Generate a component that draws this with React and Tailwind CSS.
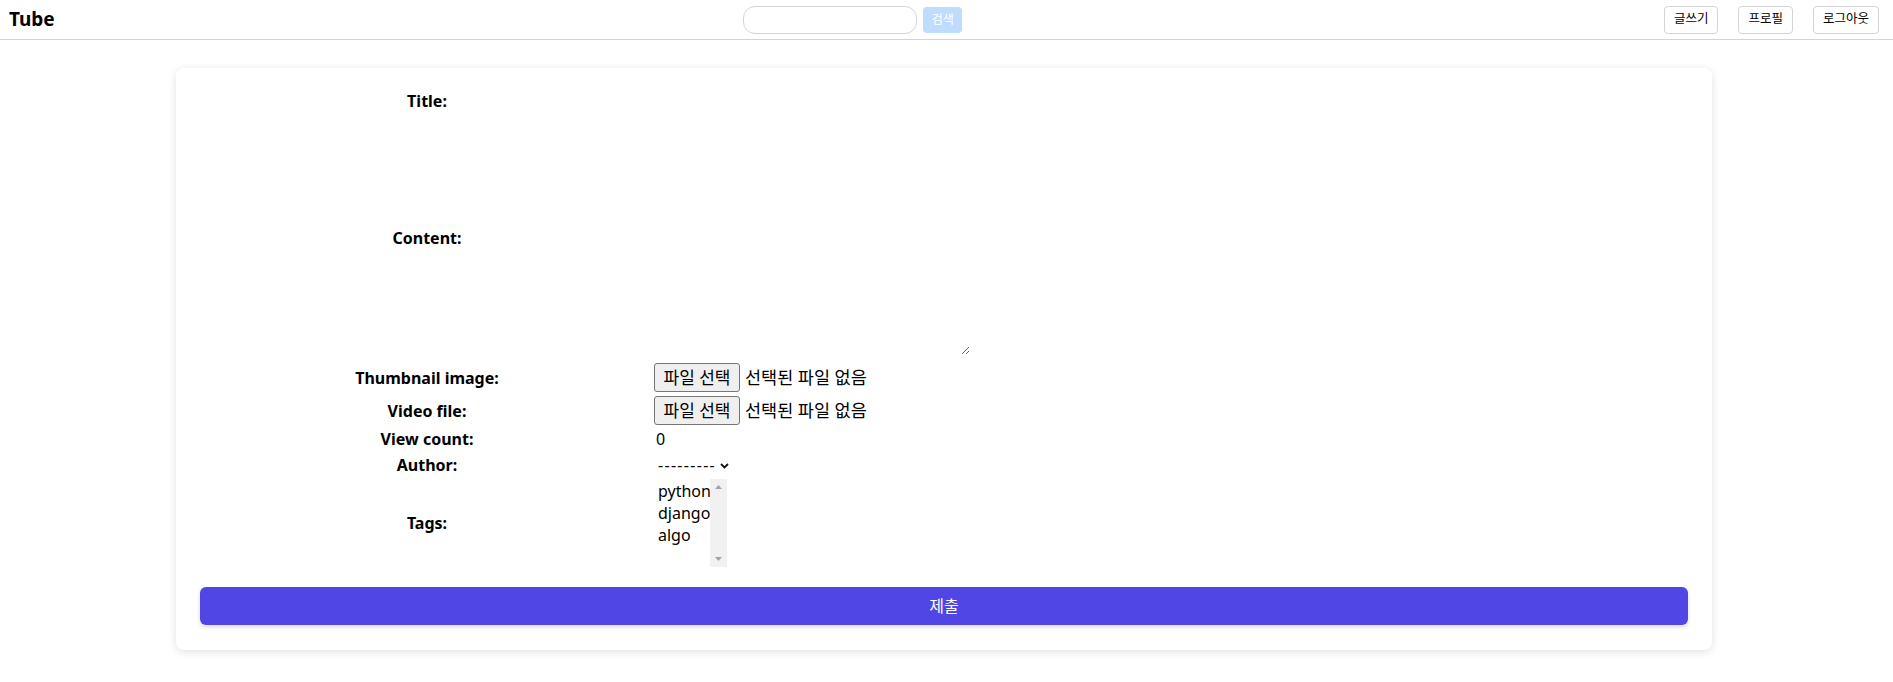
import React from 'react';

const FileField = () => (
  <div className="flex items-center">
    <button
      type="button"
      className="w-[86px] h-[29px] flex items-center justify-center bg-[#efefef] border border-[#767676] rounded-[3px] text-[17px] font-normal text-black"
    >
      파일 선택
    </button>
    <span className="ml-[5px] text-[17.5px] text-black">선택된 파일 없음</span>
  </div>
);

const Row = ({ label, className, children }) => (
  <div className={`grid grid-cols-[454px_1fr] items-center ${className}`}>
    <div className="text-center font-bold text-base text-black">{label}</div>
    <div className="flex items-center">{children}</div>
  </div>
);

const App = () => {
  return (
    <div className="min-h-screen bg-white font-['Noto_Sans','Noto_Sans_CJK_KR',sans-serif] text-black">
      {/* Header */}
      <header className="h-10 border-b border-[#d4d4d8] flex items-center justify-between pl-[9px] pr-[14px]">
        <div className="text-[19px] font-bold leading-none">Tube</div>
        <div className="flex items-center gap-1.5 mr-[13px]">
          <input
            type="text"
            className="w-[174px] h-[28px] border border-[#d1d5db] rounded-[12px] px-3 text-sm outline-none"
          />
          <button className="w-[39px] h-[26px] bg-[#bfdbfe] text-white text-xs rounded-[4px]">검색</button>
        </div>
        <div className="flex items-center gap-5">
          <button className="h-7 px-[9px] border border-[#d4d4d8] rounded-[4px] text-[12.5px] font-normal">글쓰기</button>
          <button className="h-7 px-[9px] border border-[#d4d4d8] rounded-[4px] text-[12.5px] font-normal">프로필</button>
          <button className="h-7 px-[9px] border border-[#d4d4d8] rounded-[4px] text-[12.5px] font-normal">로그아웃</button>
        </div>
      </header>

      {/* Form card */}
      <div className="w-[1536px] ml-[176px] mt-[28px] bg-white rounded-lg shadow-[0_2px_8px_rgba(0,0,0,0.12)] px-6 pt-[18px] pb-[25px]">
        <form className="flex flex-col">
          <Row label="Title:" className="h-[30px]">
            <input type="text" className="w-[316px] h-6 outline-none" />
          </Row>
          <Row label="Content:" className="h-[234px] mt-[5px]">
            <textarea className="w-[316px] h-[234px] outline-none" />
          </Row>
          <Row label="Thumbnail image:" className="h-[29px] mt-[8px]">
            <FileField />
          </Row>
          <Row label="Video file:" className="h-[29px] mt-[4px]">
            <FileField />
          </Row>
          <Row label="View count:" className="h-6 mt-[2px]">
            <span className="ml-[2px] text-base">0</span>
          </Row>
          <Row label="Author:" className="h-6 mt-[2px]">
            <div className="flex items-center ml-[4px]">
              <span className="text-base tracking-[1.3px] leading-none">---------</span>
              <svg className="ml-[4px] mt-[2px]" width="9" height="6" viewBox="0 0 9 6">
                <path d="M1 1 L4.5 4.5 L8 1" fill="none" stroke="#111" strokeWidth="1.8" />
              </svg>
            </div>
          </Row>
          <Row label="Tags:" className="h-[88px] mt-[2px]">
            <div className="flex h-[88px]">
              <div className="w-[56px] pl-[4px] pt-[1px] text-base leading-[22px]">
                <div>python</div>
                <div>django</div>
                <div>algo</div>
              </div>
              <div className="w-[17px] bg-[#f1f1f1] flex flex-col justify-between items-center py-[6px]">
                <svg width="7" height="4" viewBox="0 0 7 4">
                  <path d="M0 4 L3.5 0 L7 4 Z" fill="#a3a3a3" />
                </svg>
                <svg width="7" height="4" viewBox="0 0 7 4">
                  <path d="M0 0 L3.5 4 L7 0 Z" fill="#a3a3a3" />
                </svg>
              </div>
            </div>
          </Row>
          <button
            type="button"
            className="mt-5 h-[38px] w-full bg-[#4f46e5] text-white text-base rounded-md shadow-[0_2px_4px_rgba(0,0,0,0.15)]"
          >
            제출
          </button>
        </form>
      </div>
    </div>
  );
};

export default App;
